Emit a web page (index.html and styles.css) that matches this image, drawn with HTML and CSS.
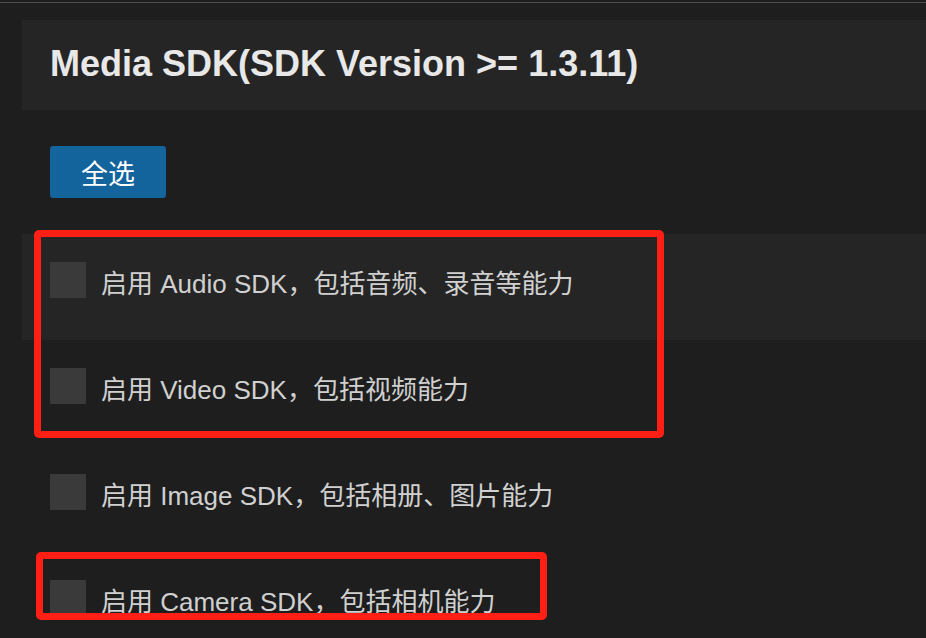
FILE: index.html
```html
<!DOCTYPE html>
<html lang="zh-CN">
<head>
<meta charset="utf-8">
<title>Media SDK</title>
<link rel="stylesheet" href="styles.css">
</head>
<body>
<div class="topline"></div>
<main class="page">
  <section class="header">
    <h1 class="title">Media SDK(SDK Version &gt;= 1.3.11)</h1>
  </section>
  <div class="actions">
    <button class="btn" type="button">全选</button>
  </div>
  <ul class="list">
    <li class="row row-active"><span class="cb"></span><span class="label">启用 Audio SDK，包括音频、录音等能力</span></li>
    <li class="row"><span class="cb"></span><span class="label">启用 Video SDK，包括视频能力</span></li>
    <li class="row"><span class="cb"></span><span class="label">启用 Image SDK，包括相册、图片能力</span></li>
    <li class="row"><span class="cb"></span><span class="label">启用 Camera SDK，包括相机能力</span></li>
  </ul>
</main>
<div class="mark mark-1"></div>
<div class="mark mark-2"></div>
</body>
</html>
```
FILE: styles.css
```css
html, body {
  margin: 0;
  padding: 0;
  height: 638px;
  overflow: hidden;
  background: #1e1e1e;
  font-family: "Liberation Sans", "Noto Sans CJK SC", sans-serif;
}
body {
  position: relative;
}
.topline {
  height: 2px;
  border-bottom: 1px solid #4c4c4c;
  background: #1e1e1e;
}
.page {
  padding-left: 22px;
}
.header {
  margin-top: 17px;
  height: 90px;
  background: #252525;
  box-sizing: border-box;
  padding: 23px 0 0 28px;
}
.title {
  margin: 0;
  font-size: 36px;
  line-height: 41px;
  font-weight: bold;
  color: #e8e8e8;
}
.actions {
  padding: 36px 0 36px 28px;
}
.btn {
  display: block;
  width: 116px;
  height: 52px;
  border: 0;
  border-radius: 3px;
  background: #13639d;
  color: #ffffff;
  font-family: "Noto Sans CJK SC", sans-serif;
  font-size: 27px;
  padding: 0;
}
.list {
  list-style: none;
  margin: 0;
  padding: 0;
}
.row {
  height: 106px;
  box-sizing: border-box;
  padding: 28px 0 0 28px;
  display: flex;
  align-items: flex-start;
  gap: 15px;
}
.row-active {
  background: #252525;
}
.cb {
  width: 36px;
  height: 36px;
  flex: none;
  background: #3a3a3a;
}
.label {
  font-size: 26px;
  line-height: 36px;
  margin-top: 4px;
  color: #d0d0d0;
  white-space: nowrap;
}
.mark {
  position: absolute;
  border: 7px solid #ff1f14;
  border-radius: 5px;
  box-sizing: border-box;
}
.mark-1 {
  left: 34px;
  top: 230px;
  width: 630px;
  height: 208px;
}
.mark-2 {
  left: 36px;
  top: 552px;
  width: 511px;
  height: 68px;
}
```
